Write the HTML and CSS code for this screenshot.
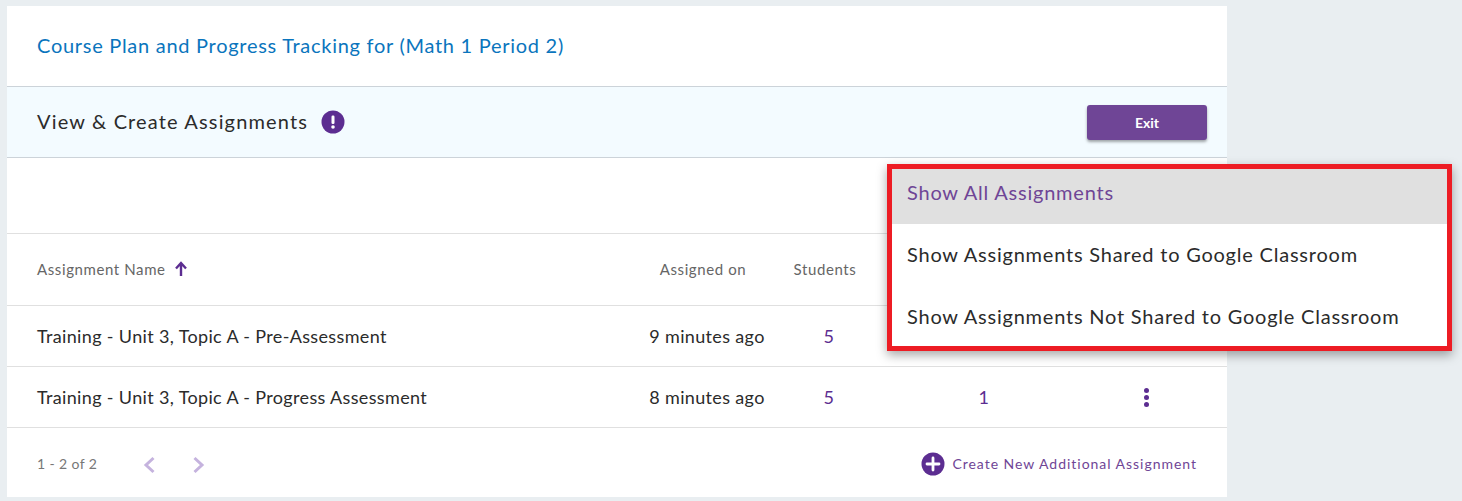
FILE: index.html
```html
<!DOCTYPE html>
<html lang="en">
<head>
    <meta charset="UTF-8">
    <title>Course Plan and Progress Tracking</title>
    <link rel="stylesheet" href="styles.css">
</head>
<body>

    <div class="card">
        <div class="title-row">
            <a href="#" class="course-title">Course Plan and Progress Tracking for (Math 1 Period 2)</a>
        </div>

        <div class="head-row">
            <h2 class="head-title">View &amp; Create Assignments</h2>
            <svg class="info-icon" width="24" height="24" viewBox="0 0 24 24">
                <circle cx="12" cy="12" r="11.5" fill="#5c2d91"/>
                <rect x="10.5" y="5.5" width="3" height="8.5" rx="1.2" fill="#fff"/>
                <circle cx="12" cy="17" r="1.8" fill="#fff"/>
            </svg>
            <a href="#" class="btn-exit">Exit</a>
        </div>

        <div class="toolbar"></div>

        <div class="row row-head">
            <div class="cell-name">
                Assignment Name
                <svg class="sort-icon" width="14" height="16" viewBox="0 0 14 16">
                    <path d="M7 15V3M2 7.5L7 2l5 5.5" fill="none" stroke="#5c2d91" stroke-width="2.4"/>
                </svg>
            </div>
            <div class="cell cell-label">Assigned on</div>
            <div class="cell cell-label">Students</div>
        </div>

        <div class="row">
            <div class="cell-name">Training - Unit 3, Topic A - Pre-Assessment</div>
            <div class="cell">9 minutes ago</div>
            <div class="cell cell-link">5</div>
        </div>

        <div class="row">
            <div class="cell-name">Training - Unit 3, Topic A - Progress Assessment</div>
            <div class="cell">8 minutes ago</div>
            <div class="cell cell-link">5</div>
            <div class="cell cell-link">1</div>
            <div class="cell cell-dots"><span class="dots"><i></i><i></i><i></i></span></div>
        </div>

        <div class="foot-row">
            <span class="page-count">1 - 2 of 2</span>
            <svg class="page-arrow" width="14" height="18" viewBox="0 0 14 18">
                <path d="M11.5 2L4 9l7.5 7" fill="none" stroke="#c5b3de" stroke-width="3"/>
            </svg>
            <svg class="page-arrow" width="14" height="18" viewBox="0 0 14 18">
                <path d="M2.5 2L10 9l-7.5 7" fill="none" stroke="#c5b3de" stroke-width="3"/>
            </svg>
            <a href="#" class="create-link">
                <svg width="24" height="24" viewBox="0 0 24 24">
                    <circle cx="12" cy="12" r="11.5" fill="#5c2d91"/>
                    <path d="M12 6v12M6 12h12" stroke="#fff" stroke-width="2.8" stroke-linecap="round"/>
                </svg>
                Create New Additional Assignment
            </a>
        </div>
    </div>

    <ul class="menu">
        <li class="menu-item active">Show All Assignments</li>
        <li class="menu-item">Show Assignments Shared to Google Classroom</li>
        <li class="menu-item">Show Assignments Not Shared to Google Classroom</li>
    </ul>

</body>
</html>
```

FILE: styles.css
```css
*{margin: 0;padding: 0;box-sizing: border-box;}
a{text-decoration: none;}
ul,li{list-style: none;}
body{background: #e9eef1; font-family: "Lato", "Open Sans", sans-serif; color: #2b2b2b; height: 501px; overflow: hidden; padding: 6px 0 0 7px;}

.card{width: 1220px; height: 491px; background: #fff;}

.title-row{height: 81px; padding: 0 30px 2px; display: flex; align-items: center; border-bottom: 1px solid #ccd3d9;}
.course-title{font-size: 20px; color: #0a75bd; letter-spacing: .72px;}

.head-row{height: 71px; padding: 0 20px 0 30px; display: flex; align-items: center; background: #f3fbff; border-bottom: 1px solid #ccd3d9;}
.head-title{font-size: 20px; font-weight: 400; letter-spacing: 1.15px; margin-bottom: 2px;}
.info-icon{margin-left: 13px;}
.btn-exit{margin-left: auto; width: 120px; height: 35px; line-height: 35px; text-align: center; background: #6f4596; color: #fff; font-size: 14px; font-weight: 700; border-radius: 3px; box-shadow: 0 2px 3px rgba(0,0,0,.35);}

.toolbar{height: 76px; border-bottom: 1px solid #e0e0e0;}

.row{height: 61px; padding: 0 29px 0 30px; display: grid; grid-template-columns: 593px 154px 90px 220px 104px; align-items: center; border-bottom: 1px solid #e0e0e0; font-size: 18px; letter-spacing: .35px;}
.row-head{height: 72px; padding-bottom: 1px; font-size: 15px; letter-spacing: .6px; color: #666;}
.cell{text-align: center;}
.cell-label{padding-right: 8px;}
.cell-link{color: #5c2d91;}
.cell-name{display: flex; align-items: center;}
.sort-icon{margin-left: 8px;}

.cell-dots{padding-bottom: 2px;}
.dots{display: inline-flex; flex-direction: column; gap: 2px; vertical-align: middle;}
.dots i{width: 5px; height: 5px; border-radius: 50%; background: #5c2d91;}

.foot-row{height: 69px; padding: 2px 30px 0; display: flex; align-items: center;}
.page-count{font-size: 14px; color: #777; letter-spacing: .4px; width: 105px;}
.page-arrow{margin: 2px 36px 0 0;}
.create-link{margin-left: auto; display: flex; align-items: center; gap: 7px; font-size: 14px; color: #6f4596; letter-spacing: .97px;}

.menu{position: absolute; left: 887px; top: 164px; width: 565px; height: 187px; background: #fff; border: 5px solid #ed1c24; box-shadow: 0 4px 10px rgba(0,0,0,.35); font-size: 20px; letter-spacing: .78px;}
.menu-item{height: 62px; padding: 0 0 2px 15px; display: flex; align-items: center;}
.menu-item.active{height: 55px; padding-bottom: 9px; background: #e0e0e0; color: #6f4596;}
```
